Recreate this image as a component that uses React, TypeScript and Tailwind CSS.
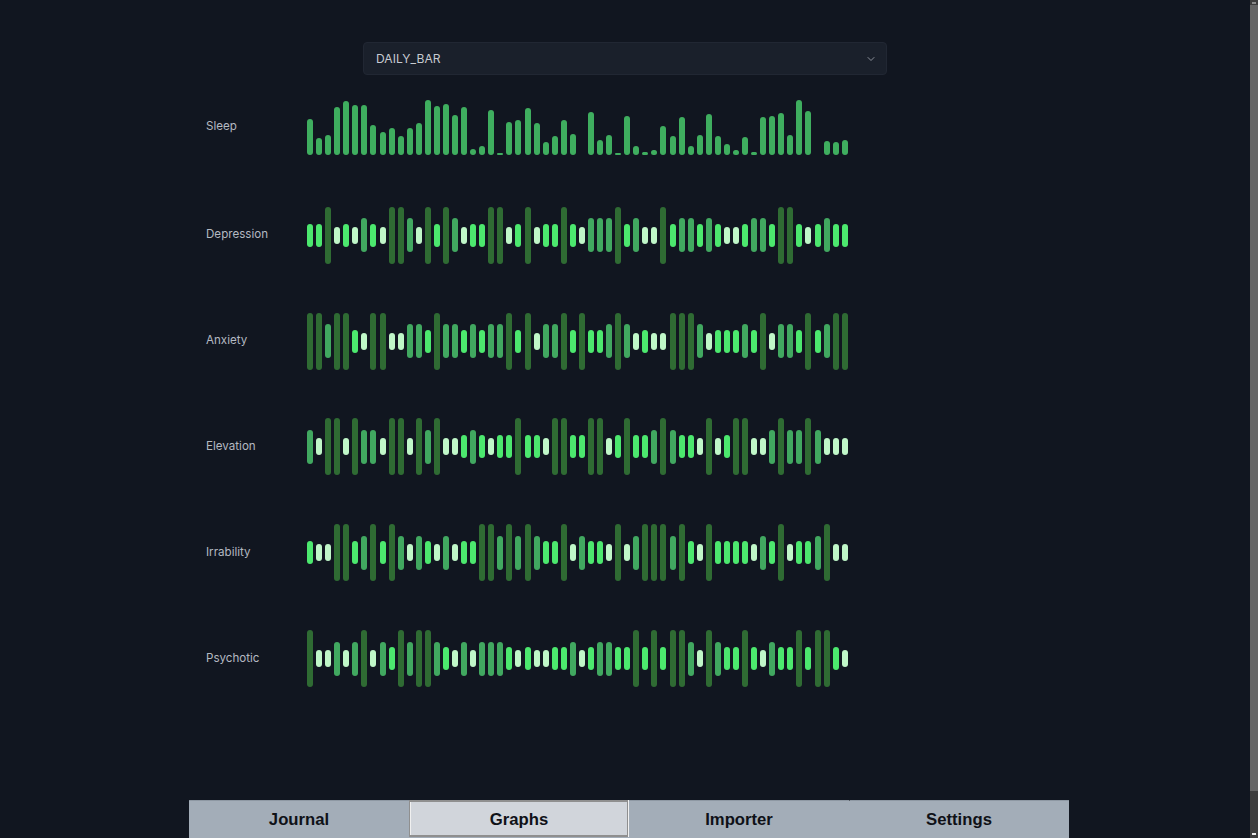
import { ChevronDown } from 'lucide-react'

const sleep = [
  36, 16.7, 20.3, 48, 54, 50, 50, 30, 22.7, 27.3, 19.3, 27.3, 32.3, 55, 48.7, 51, 40.3, 48, 6, 9.3,
  45, 2, 33.3, 34.7, 46.7, 32.3, 13.3, 19.3, 34.7, 21.3, 0, 43, 15.3, 20.3, 1.7, 39.3, 9.3, 2.7, 5, 28.7,
  19, 38.3, 9.3, 20.3, 40.7, 19, 10.7, 5, 17.7, 3.3, 38.3, 39.3, 42, 20.3, 55, 44.3, 0, 14.3, 13, 15.3,
]

// one letter per day: L light/short, B bright, M mid, D dark/tall
const moods = [
  { name: 'Depression', days: 'BBDLBLMBLDDMLDBDMLBBDDLBDLBBDBLMMMDBMLLDBMMBMBLLBMMBDDBLBMBB' },
  { name: 'Anxiety', days: 'DDMDDBLDDLLMMBDMMBMBMMDBDLMMDBDBBMDMLBLLDDDMLBBBMBDLMMBDBMDD' },
  { name: 'Elevation', days: 'MLDDLDMMLDDLDMDLLBMBLBBDBBLDDBBDDLBDBBMDMBBLDLBDDLLMDMMDMLLL' },
  { name: 'Irrability', days: 'BLLDDBMDBDMLMBLMLBBDDMDMDMBBDLMBBLDLMDDDMDBLDBBBBLMBDLBBMDLL' },
  { name: 'Psychotic', days: 'DLLMLMDLMBDMDDMBLMLMMMBLBLLBBMLBMMBBDBDBDDMLDMBBDBLMBBDBDDBL' },
]

const barStyles: Record<string, string> = {
  L: 'h-[17px] bg-[#c0f7c8]',
  B: 'h-[23px] bg-[#4ce86e]',
  M: 'h-[34px] bg-[#41a860]',
  D: 'h-[57px] bg-[#2f6b33]',
}

const tabs = ['Journal', 'Graphs', 'Importer', 'Settings']

function Label({ children }: { children: string }) {
  return <div className="w-[101px] shrink-0 text-[11.6px] text-[#b4b9c1]">{children}</div>
}

export default function App() {
  return (
    <div className="flex h-[838px] overflow-hidden bg-[#111620] font-['Inter',sans-serif]">
      <div className="flex flex-1 flex-col">
        <div className="flex flex-1 flex-col pl-[206px] pt-[42px]">
          {/* Graph type */}
          <div className="ml-[157px] flex h-[33px] w-[524px] items-center justify-between rounded border border-[#212733] bg-[#1a202b] pl-3 pr-[9px] text-[12.1px] text-[#c6cad0]">
            <span className="pt-px">DAILY_BAR</span>
            <ChevronDown size={12} className="text-[#8b909a]" />
          </div>

          {/* Sleep */}
          <div className="mt-[23px] flex h-[57px] items-center">
            <Label>Sleep</Label>
            <div className="flex h-full w-[541px] items-end justify-between">
              {sleep.map((h, i) => (
                <div key={i} className="w-[6px] rounded-full bg-[#3fae5f]" style={{ height: h }} />
              ))}
            </div>
          </div>

          {/* Mood rows */}
          <div className="mt-[51.7px] flex flex-col gap-[48.9px]">
            {moods.map((m) => (
              <div key={m.name} className="flex h-[57px] items-center">
                <Label>{m.name}</Label>
                <div className="flex w-[541px] items-center justify-between">
                  {m.days.split('').map((d, i) => (
                    <div key={i} className={`w-[6px] rounded-full ${barStyles[d]}`} />
                  ))}
                </div>
              </div>
            ))}
          </div>
        </div>

        {/* Bottom nav */}
        <div className="ml-[189px] grid h-[38px] w-[880px] grid-cols-4 bg-[#a3adb8] font-['Liberation_Sans',sans-serif] text-[16.7px] font-bold text-[#0f1117]">
          {tabs.map((t) => (
            <div
              key={t}
              className={
                t === 'Graphs'
                  ? 'mr-px mb-px flex items-center justify-center border border-y-2 border-[#8f8f8f] bg-[#d1d5db] pt-[2px] pl-px shadow-[inset_1px_0_0_#f0f0f0,1px_0_0_#f1f1f1]'
                  : 'relative flex items-center justify-center border-t border-[#8e98a3]'
              }
            >
              {t}
              {t === 'Settings' && <div className="absolute top-[-1px] left-0 h-px w-px bg-[#555b63]" />}
            </div>
          ))}
        </div>
      </div>

      {/* Scrollbar */}
      <div className="flex w-2 shrink-0 flex-col bg-[#3e3e3e]">
        <div className="flex h-[5px] items-center justify-center">
          <div className="h-[2px] w-1 bg-[#8a8a8a]" />
        </div>
        <div className="h-[786px] bg-[#666666]" />
        <div className="flex flex-1 items-end justify-center pb-[3px]">
          <div className="h-[2px] w-1 bg-[#e8e8e8]" />
        </div>
      </div>
    </div>
  )
}
